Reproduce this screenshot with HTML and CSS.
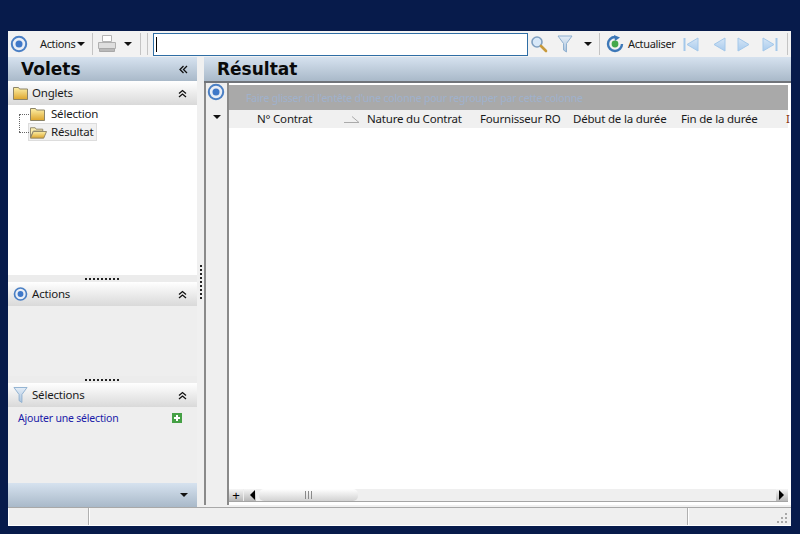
FILE: index.html
```html
<!DOCTYPE html>
<html lang="fr">
<head>
<meta charset="utf-8">
<title>Résultat</title>
<link rel="stylesheet" href="styles.css">
</head>
<body>
<svg class="defs" width="0" height="0" aria-hidden="true">
  <defs>
    <linearGradient id="gFolder" x1="0" y1="0" x2="0" y2="1"><stop offset="0" stop-color="#fdf0a8"/><stop offset="1" stop-color="#dda52c"/></linearGradient>
    <linearGradient id="gFunnel" x1="0" y1="0" x2="0" y2="1"><stop offset="0" stop-color="#e4edf7"/><stop offset="1" stop-color="#a9c3dd"/></linearGradient>
    <linearGradient id="gNav" x1="0" y1="0" x2="0" y2="1"><stop offset="0" stop-color="#d6e6f6"/><stop offset="1" stop-color="#a9cbed"/></linearGradient>
    <symbol id="target" viewBox="0 0 18 18">
      <circle cx="9" cy="9" r="7.200" fill="#e9eef6" stroke="#4a7fc4" stroke-width="2"/>
      <circle cx="9" cy="9" r="3.500" fill="#3f78c8"/>
    </symbol>
    <symbol id="folder" viewBox="0 0 15 14">
      <path d="M.5 1.500h5l1 1.500h8v10.500H.5z" fill="url(#gFolder)" stroke="#8c8468"/>
    </symbol>
    <symbol id="funnel" viewBox="0 0 16 18">
      <path d="M1 1h14l-5.500 7.500V17l-3-2V8.500z" fill="url(#gFunnel)" stroke="#8fb0d0"/>
    </symbol>
    <symbol id="chev" viewBox="0 0 9 9">
      <path d="M1 4.500l3.500-3 3.500 3M1 8l3.500-3 3.500 3" fill="none" stroke="#111" stroke-width="1.300"/>
    </symbol>
  </defs>
</svg>
<div class="window">
  <div class="toolbar">
    <svg class="ic18 tb-logo"><use href="#target"/></svg>
    <span class="tb-label tb-actions">Actions</span><span class="caret"></span>
    <span class="tb-sep sep-a"></span>
    <svg class="printer" width="20" height="20" viewBox="0 0 20 20">
      <path d="M5.500 1.500h9v6h-9z" fill="#fff" stroke="#b5b5b5"/>
      <path d="M1.500 8.500h17v6h-17z" fill="#dedede" stroke="#b0b0b0"/>
      <path d="M2.500 14.500h15v3h-15z" fill="#b9b9b9" stroke="#a8a8a8"/>
    </svg>
    <span class="caret caret-print"></span>
    <span class="tb-sep sep-b"></span><span class="tb-sep sep-c"></span>
    <span class="search-box"><span class="cursor"></span></span>
    <svg class="magnifier" width="18" height="18" viewBox="0 0 18 18">
      <circle cx="7" cy="7" r="5" fill="#d8e8f8" stroke="#7f9fc0" stroke-width="1.600"/>
      <path d="M11 11l5 5" stroke="#c89a3c" stroke-width="2.600" stroke-linecap="round"/>
    </svg>
    <svg class="tb-funnel" width="16" height="18"><use href="#funnel"/></svg>
    <span class="caret caret-filter"></span>
    <span class="tb-sep sep-d"></span>
    <svg class="refresh" width="18" height="18" viewBox="0 0 18 18">
      <path d="M9 2a7 7 0 1 0 7 7" fill="none" stroke="#3d78b8" stroke-width="2.400"/>
      <path d="M8 0l6 2.500-5 3.500z" fill="#3d78b8"/>
      <circle cx="9" cy="9" r="3.400" fill="#45a84a"/>
    </svg>
    <span class="tb-label tb-refresh">Actualiser</span>
    <svg class="nav nav-first" width="16" height="15" viewBox="0 0 16 15"><path d="M1.500 1v13" stroke="#a4c8ea" stroke-width="2"/><path d="M15 1v13L4 7.500z" fill="url(#gNav)" stroke="#a4c8ea"/></svg>
    <svg class="nav nav-prev" width="13" height="15" viewBox="0 0 13 15"><path d="M12 1v13L1 7.500z" fill="url(#gNav)" stroke="#a4c8ea"/></svg>
    <svg class="nav nav-next" width="13" height="15" viewBox="0 0 13 15"><path d="M1 1v13l11-6.500z" fill="url(#gNav)" stroke="#a4c8ea"/></svg>
    <svg class="nav nav-last" width="16" height="15" viewBox="0 0 16 15"><path d="M1 1v13l11-6.500z" fill="url(#gNav)" stroke="#a4c8ea"/><path d="M14.500 1v13" stroke="#a4c8ea" stroke-width="2"/></svg>
    <span class="tb-sep sep-e"></span>
  </div>

  <div class="main">
    <aside class="sidebar">
      <div class="pane-title">
        <span class="title-text">Volets</span>
        <svg class="collapse" width="9" height="9" viewBox="0 0 9 9"><path d="M4.500 1l-3.500 3.500 3.500 3.500M8 1L4.500 4.500 8 8" fill="none" stroke="#111" stroke-width="1.300"/></svg>
      </div>
      <div class="sec-head">
        <svg class="sec-ic sec-folder" width="15" height="14"><use href="#folder"/></svg>
        <span class="sec-label">Onglets</span>
        <svg class="chev" width="9" height="9"><use href="#chev"/></svg>
      </div>
      <div class="tree">
        <div class="tree-row">
          <span class="branch branch-top"></span>
          <svg class="tree-ic" width="15" height="14"><use href="#folder"/></svg>
          <span class="tree-label">Sélection</span>
        </div>
        <div class="tree-row">
          <span class="branch"></span>
          <span class="tree-selected">
            <svg class="tree-ic" width="17" height="14" viewBox="0 0 18 14"><path d="M.5 2.500h5l1 1.500h7v2h-10l-3 7z" fill="#fbeeb0" stroke="#8c8468"/><path d="M3.500 6.500h14l-3 7H.5z" fill="url(#gFolder)" stroke="#8c8468"/></svg>
            <span class="tree-label">Résultat</span>
          </span>
        </div>
      </div>
      <div class="grip"><span class="dots"></span></div>
      <div class="sec-head">
        <svg class="sec-ic" width="16" height="16"><use href="#target"/></svg>
        <span class="sec-label">Actions</span>
        <svg class="chev" width="9" height="9"><use href="#chev"/></svg>
      </div>
      <div class="sec-body actions-body"></div>
      <div class="grip"><span class="dots"></span></div>
      <div class="sec-head">
        <svg class="sec-ic" width="15" height="18"><use href="#funnel"/></svg>
        <span class="sec-label">Sélections</span>
        <svg class="chev" width="9" height="9"><use href="#chev"/></svg>
      </div>
      <div class="sec-body sel-body">
        <span class="link">Ajouter une sélection</span>
        <svg class="add" width="10" height="10" viewBox="0 0 10 10"><path d="M0 0h10v10H0z" fill="#45a045"/><path d="M2 5h6M5 2v6" stroke="#fff" stroke-width="2"/></svg>
      </div>
      <div class="side-foot"><span class="caret"></span></div>
    </aside>

    <div class="splitter"><span class="split-dots"></span></div>

    <section class="content">
      <div class="pane-title result-title"><span class="title-text">Résultat</span></div>
      <div class="grid-wrap">
        <div class="gutter">
          <svg class="ic18 gutter-logo"><use href="#target"/></svg>
          <span class="caret gutter-caret"></span>
        </div>
        <div class="grid">
          <div class="group-panel">Faire glisser ici l'entête d'une colonne pour regrouper par cette colonne</div>
          <div class="col-head">
            <span class="col col-no">N° Contrat</span>
            <span class="col col-nature">Nature du Contrat</span>
            <span class="col col-four">Fournisseur RO</span>
            <span class="col col-debut">Début de la durée</span>
            <span class="col col-fin">Fin de la durée</span>
            <span class="col col-more">I</span>
            <svg class="sort" width="15" height="7" viewBox="0 0 15 7"><path d="M0 6.500h15L8 .5" fill="none" stroke="#aaa"/></svg>
          </div>
          <div class="grid-body"></div>
          <div class="scroll-row">
            <span class="sb-btn sb-plus">+</span>
            <span class="sb-btn sb-left"><span class="tri-left"></span></span>
            <span class="sb-thumb"><span class="thumb-grip"></span></span>
            <span class="sb-track"></span>
            <span class="sb-btn sb-right"><span class="tri-right"></span></span>
          </div>
        </div>
      </div>
    </section>
  </div>

  <div class="statusbar">
    <span class="st st-a"></span>
    <span class="st st-b"></span>
    <span class="st st-c">
      <svg class="resize" width="12" height="12" viewBox="0 0 12 12"><path d="M9 1h2v2H9zM5 5h2v2H5zM9 5h2v2H9zM1 9h2v2H1zM5 9h2v2H5zM9 9h2v2H9z" fill="#a8a8a8"/></svg>
    </span>
  </div>
</div>
</body>
</html>
```

FILE: styles.css
```css
* { box-sizing: border-box; }
html, body { margin: 0; height: 100%; }
body {
  background: #071b4b;
  padding: 31px 9px 8px 8px;
  overflow: hidden;
  font: 11.500px "Noto Sans", "Open Sans", sans-serif;
  letter-spacing: -.2px;
  color: #1a1a1a;
}
.defs { position: absolute; }
.window {
  height: 495px;
  background: #f0f0f0;
  display: flex;
  flex-direction: column;
}
.toolbar {
  height: 26px;
  flex: none;
  display: flex;
  align-items: center;
  background: #f2f2f2;
}
.ic18 { width: 18px; height: 18px; flex: none; }
.tb-logo { margin-left: 2px; }
.tb-label { font-size: 11px; letter-spacing: -.35px; padding-bottom: 2px; flex: none; white-space: nowrap; }
.tb-actions { margin-left: 12px; width: 35px; }
.caret {
  display: inline-block;
  width: 0; height: 0;
  border: 4px solid transparent;
  border-top: 4px solid #111;
  border-bottom: 0;
  flex: none;
}
.toolbar .caret { margin-left: 2px; }
.tb-sep { width: 1px; height: 22px; background: #c4c4c4; flex: none; }
.sep-a { margin-left: 7px; }
.printer { margin-left: 4px; flex: none; }
.toolbar .caret-print { margin-left: 7px; }
.sep-b { margin-left: 8px; }
.sep-c { margin-left: 6px; }
.search-box {
  margin-left: 5px;
  width: 375px;
  height: 23px;
  background: #fff;
  border: 1px solid #2f6ea5;
  display: flex;
  align-items: center;
  padding-left: 2px;
  flex: none;
}
.cursor { width: 1px; height: 15px; background: #000; }
.magnifier { margin-left: 2px; flex: none; }
.tb-funnel { margin-left: 9px; flex: none; }
.toolbar .caret-filter { margin-left: 11px; }
.sep-d { margin-left: 7px; }
.refresh { margin-left: 6px; flex: none; }
.tb-refresh { margin-left: 4px; width: 46px; }
.nav { flex: none; }
.nav-first { margin-left: 9px; }
.nav-prev { margin-left: 14px; }
.nav-next { margin-left: 11px; }
.nav-last { margin-left: 12px; }
.sep-e { margin-left: 9px; }

.main { flex: 1; min-height: 0; display: flex; }
.sidebar { width: 189px; flex: none; display: flex; flex-direction: column; }
.pane-title {
  height: 24px;
  flex: none;
  display: flex;
  align-items: center;
  justify-content: space-between;
  background: linear-gradient(#d6e2ef, #a9b9c9);
  padding: 0 9px 0 13px;
}
.title-text { font: bold 17px "DejaVu Sans", sans-serif; letter-spacing: 0; color: #0a0a0a; }
.sec-head {
  height: 24px;
  flex: none;
  display: flex;
  align-items: center;
  background: linear-gradient(#ffffff, #d9d9d9);
  padding: 0 10px 0 5px;
}
.sec-ic { flex: none; width: 15px; }
.sec-label { margin-left: 4px; flex: 1; padding-bottom: 1px; }
.chev { flex: none; }
.tree { height: 170px; flex: none; background: #fff; }
.tree-row { height: 18px; display: flex; align-items: center; position: relative; padding-left: 22px; }
.tree-row .tree-ic { flex: none; }
.tree-label { margin-left: 6px; padding-bottom: 2px; }
.branch { position: absolute; left: 11px; top: 9px; width: 10px; border-top: 1px dotted #666; }
.branch-top { height: 18px; border-left: 1px dotted #666; }
.tree-selected {
  display: flex; align-items: center; height: 18px;
  background: #f1f1f1; border: 1px solid #ddd;
  padding: 0 3px 0 1px; margin-left: -2px;
}
.tree-selected .tree-label { margin-left: 4px; }
.grip { height: 7px; flex: none; background: #ececec; display: flex; justify-content: center; align-items: center; }
.dots { width: 36px; height: 2px; background: repeating-linear-gradient(90deg, #222 0 2px, transparent 2px 4px); }
.sec-body { background: #eeeeee; flex: none; }
.actions-body { height: 70px; }
.sel-body { height: 76px; display: flex; justify-content: space-between; align-items: flex-start; padding: 4px 15px 0 10px; }
.link { color: #1a1aa8; font-size: 10.500px; letter-spacing: -.2px; }
.add { margin-top: 2px; }
.side-foot {
  flex: 1;
  display: flex; align-items: center; justify-content: flex-end;
  padding-right: 9px;
  background: linear-gradient(#d6e2ef, #a9b9c9);
}
.splitter { width: 7px; flex: none; position: relative; }
.split-dots { position: absolute; left: 3px; top: 208px; width: 2px; height: 36px; background: repeating-linear-gradient(#222 0 2px, transparent 2px 4px); }
.content { flex: 1; display: flex; flex-direction: column; min-width: 0; padding-bottom: 2px; }
.result-title { height: 26px; padding-left: 13px; border-bottom: 2px solid #70747a; }
.grid-wrap { flex: 1; display: flex; background: #fff; border-left: 2px solid #8a8a8a; min-height: 0; }
.gutter { width: 21px; flex: none; background: #efefef; display: flex; flex-direction: column; align-items: center; }
.gutter-logo { margin-left: -1px; }
.gutter-caret { margin-top: 14px; }
.grid {
  flex: 1; min-width: 0;
  display: flex; flex-direction: column;
  border-left: 2px solid #8a8a8a;
  padding: 2px 3px 3px 0;
}
.group-panel {
  height: 25px; flex: none;
  background: #a9a9a9;
  color: #9fb1cc;
  font-size: 10.500px;
  line-height: 27px;
  padding-left: 17px;
  white-space: nowrap;
  overflow: hidden;
}
.col-head {
  height: 18px; flex: none;
  background: #f0f0f0;
  display: flex;
  align-items: center;
  padding-left: 28px;
  position: relative;
  white-space: nowrap;
}
.col { flex: none; padding-bottom: 1px; }
.col-no { width: 110px; }
.col-nature { width: 113px; }
.col-four { width: 93px; }
.col-debut { width: 108px; }
.col-fin { width: 105px; }
.col-more { color: #8a3010; }
.sort { position: absolute; left: 115px; top: 6px; }
.grid-body { flex: 1; background: #fff; }
.scroll-row {
  height: 13px; flex: none;
  display: flex;
  align-items: stretch;
  background: #efefef;
  border-bottom: 1px solid #a5a5a5;
}
.sb-btn { flex: none; display: flex; align-items: center; justify-content: center; background: linear-gradient(#f6f6f6, #b8b8b8); }
.sb-plus { width: 14px; font: 13px/1 "Liberation Sans", sans-serif; letter-spacing: 0; color: #000; }
.sb-left { width: 12px; margin-left: 1px; justify-content: flex-end; padding-right: 1px; }
.sb-right { width: 12px; justify-content: flex-start; padding-left: 3px; }
.tri-left, .tri-right { width: 0; height: 0; border: 5px solid transparent; }
.tri-left { border-left: 0; border-right: 5px solid #000; }
.tri-right { border-right: 0; border-left: 5px solid #000; }
.sb-thumb {
  width: 99px; flex: none; margin-left: 3px;
  background: linear-gradient(#ffffff, #d2d2d2);
  border-radius: 5px;
  display: flex; align-items: center; justify-content: center;
}
.thumb-grip { width: 7px; height: 8px; background: repeating-linear-gradient(90deg, #8a8a8a 0 1px, transparent 1px 3px); }
.sb-track { flex: 1; }
.statusbar {
  height: 19px; flex: none;
  display: flex;
  border-top: 1px solid #a8a8a8;
  border-bottom: 1px solid #fff;
  background: #efefef;
}
.st { flex: none; border-right: 1px solid #b0b0b0; border-left: 1px solid #fff; }
.st-a { width: 81px; }
.st-b { width: 599px; }
.st-c { flex: 1; border-right: 0; position: relative; }
.resize { position: absolute; right: 3px; bottom: 1px; }
```
